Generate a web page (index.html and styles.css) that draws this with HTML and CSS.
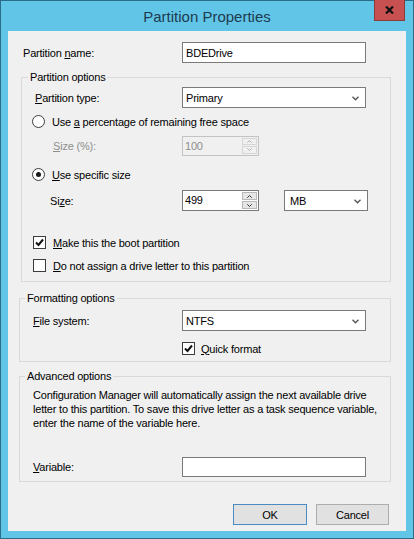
FILE: index.html
```html
<!DOCTYPE html>
<html lang="en">
<head>
    <meta charset="UTF-8">
    <title>Partition Properties</title>
    <link rel="stylesheet" href="styles.css">
</head>
<body>
<div class="window">
    <div class="titlebar">
        <span class="title">Partition Properties</span>
        <div class="close">
            <svg width="9" height="8" viewBox="0 0 9 8"><path d="M1 0.5 L8 7.5 M8 0.5 L1 7.5" stroke="#111" stroke-width="2.2" fill="none"/></svg>
        </div>
    </div>

    <div class="panel">
        <div class="row name-row">
            <span class="lbl">Partition <u>n</u>ame:</span>
            <div class="edit wide">BDEDrive</div>
        </div>

        <fieldset class="group g-part">
            <legend>Partition options</legend>
            <div class="row type-row">
                <span class="lbl"><u>P</u>artition type:</span>
                <div class="combo wide">
                    <span>Primary</span>
                    <svg width="7" height="5" viewBox="0 0 7 5"><polyline points="0.5,0.8 3.5,3.8 6.5,0.8" stroke="#555" stroke-width="1.4" fill="none"/></svg>
                </div>
            </div>
            <div class="row opt pct-opt">
                <span class="radio"></span>
                <span>Use <u>a</u> percentage of remaining free space</span>
            </div>
            <div class="row pct-row">
                <span class="lbl off"><u>S</u>ize (%):</span>
                <div class="spin off">
                    <span class="spin-text">100</span>
                    <span class="arrows">
                        <span class="arr"><svg width="5" height="3" viewBox="0 0 5 3"><polyline points="0.3,2.7 2.5,0.5 4.7,2.7" stroke="#b0b0b0" stroke-width="1" fill="none"/></svg></span>
                        <span class="arr"><svg width="5" height="3" viewBox="0 0 5 3"><polyline points="0.3,0.3 2.5,2.5 4.7,0.3" stroke="#b0b0b0" stroke-width="1" fill="none"/></svg></span>
                    </span>
                </div>
            </div>
            <div class="row opt size-opt">
                <span class="radio on"></span>
                <span><u>U</u>se specific size</span>
            </div>
            <div class="row size-row">
                <span class="lbl">Si<u>z</u>e:</span>
                <div class="spin">
                    <span class="spin-text">499</span>
                    <span class="arrows">
                        <span class="arr"><svg width="5" height="3" viewBox="0 0 5 3"><polyline points="0.3,2.7 2.5,0.5 4.7,2.7" stroke="#333" stroke-width="1" fill="none"/></svg></span>
                        <span class="arr"><svg width="5" height="3" viewBox="0 0 5 3"><polyline points="0.3,0.3 2.5,2.5 4.7,0.3" stroke="#333" stroke-width="1" fill="none"/></svg></span>
                    </span>
                </div>
                <div class="combo unit">
                    <span>MB</span>
                    <svg width="7" height="5" viewBox="0 0 7 5"><polyline points="0.5,0.8 3.5,3.8 6.5,0.8" stroke="#555" stroke-width="1.4" fill="none"/></svg>
                </div>
            </div>
            <div class="row opt boot-opt">
                <span class="check"><svg width="11" height="11" viewBox="0 0 11 11"><polyline points="2,5.5 4.5,8 9,2.5" stroke="#111" stroke-width="2" fill="none"/></svg></span>
                <span><u>M</u>ake this the boot partition</span>
            </div>
            <div class="row opt letter-opt">
                <span class="check"></span>
                <span><u>D</u>o not assign a drive letter to this partition</span>
            </div>
        </fieldset>

        <fieldset class="group g-format">
            <legend>Formatting options</legend>
            <div class="row fs-row">
                <span class="lbl"><u>F</u>ile system:</span>
                <div class="combo wide">
                    <span>NTFS</span>
                    <svg width="7" height="5" viewBox="0 0 7 5"><polyline points="0.5,0.8 3.5,3.8 6.5,0.8" stroke="#555" stroke-width="1.4" fill="none"/></svg>
                </div>
            </div>
            <div class="row opt quick-opt">
                <span class="check"><svg width="11" height="11" viewBox="0 0 11 11"><polyline points="2,5.5 4.5,8 9,2.5" stroke="#111" stroke-width="2" fill="none"/></svg></span>
                <span><u>Q</u>uick format</span>
            </div>
        </fieldset>

        <fieldset class="group g-adv">
            <legend>Advanced options</legend>
            <p class="note">Configuration Manager will automatically assign the next available drive<br>letter to this partition. To save this drive letter as a task sequence variable,<br>enter the name of the variable here.</p>
            <div class="row var-row">
                <span class="lbl"><u>V</u>ariable:</span>
                <div class="edit wide"></div>
            </div>
        </fieldset>

        <div class="buttons">
            <div class="btn default">OK</div>
            <div class="btn">Cancel</div>
        </div>
    </div>
</div>
</body>
</html>
```

FILE: styles.css
```css
* {
    box-sizing: border-box;
}

body {
    margin: 0;
    font-family: "Liberation Sans", Arial, sans-serif;
    font-size: 11px;
    letter-spacing: -0.2px;
    color: #000;
}

u {
    text-underline-offset: 1px;
}

.window {
    width: 414px;
    height: 539px;
    border: 1px solid #2b6d89;
    background: #61c5e7;
    padding: 0 7px 7px;
    display: flex;
    flex-direction: column;
}

.titlebar {
    height: 30px;
    display: grid;
    grid-template-columns: 1fr auto 1fr;
    align-items: center;
}

.title {
    grid-column: 2;
    font-size: 15px;
    letter-spacing: 0;
    color: #1d3b4f;
}

.close {
    grid-column: 3;
    justify-self: end;
    align-self: start;
    width: 31px;
    height: 21px;
    margin-top: -1px;
    margin-right: 1px;
    background: #c75050;
    border: 1px solid #8d3a3a;
    border-top: none;
    display: flex;
    align-items: center;
    justify-content: center;
}

.panel {
    height: 500px;
    background: #f0f0f0;
    padding-top: 11px;
}

.row {
    display: flex;
    align-items: center;
    height: 21px;
}

.lbl {
    flex: none;
}

.off {
    color: #8e8e8e;
}

/* text boxes and combos */
.edit, .combo {
    height: 21px;
    border: 1px solid #7a7a7a;
    background: #fff;
    display: flex;
    align-items: center;
    padding-left: 3px;
}

.wide {
    width: 184px;
}

.combo {
    justify-content: space-between;
    padding-right: 6px;
}

.combo svg {
    margin-top: 1px;
}

.unit {
    width: 84px;
    margin-left: 25px;
    padding-left: 5px;
}

.spin {
    width: 77px;
    height: 21px;
    display: flex;
    border: 1px solid #7a7a7a;
    background: #fff;
}

.spin-text {
    flex: 1;
    padding-left: 2px;
    line-height: 19px;
}

.arrows {
    width: 17px;
    display: flex;
    flex-direction: column;
    padding: 1px;
    gap: 1px;
}

.arr {
    flex: 1;
    background: #e6e6e6;
    border: 1px solid #b9b9b9;
    display: flex;
    align-items: center;
    justify-content: center;
}

.spin.off {
    border-color: #c3c3c3;
    background: #f0f0f0;
    color: #8e8e8e;
    height: 20px;
}

.spin.off .arr {
    background: #f0f0f0;
    border-color: #d6d6d6;
}

/* radios and checks */
.opt {
    height: 15px;
    gap: 7px;
}

.radio {
    width: 13px;
    height: 13px;
    border: 1px solid #3c3c3c;
    border-radius: 50%;
    background: #fff;
    display: flex;
    align-items: center;
    justify-content: center;
}

.radio.on::after {
    content: "";
    width: 5px;
    height: 5px;
    border-radius: 50%;
    background: #1a1a1a;
}

.check {
    width: 13px;
    height: 13px;
    border: 1px solid #3c3c3c;
    background: #fff;
    display: flex;
    align-items: center;
    justify-content: center;
}

/* group boxes */
.group {
    margin: 0 15px 0 11px;
    padding: 0;
    border: 1px solid #d9d9d9;
    min-width: 0;
}

.group legend {
    padding: 0 2px;
    margin-left: 5px;
    line-height: 15px;
}

.name-row {
    padding-left: 15px;
}

.name-row .lbl {
    width: 159px;
}

.g-part {
    margin-top: 7px;
    margin-left: 13px;
    padding: 2px 0 8px;
}

.g-part legend {
    margin-left: 6px;
}

.type-row {
    padding-left: 13px;
}

.type-row .lbl {
    width: 147px;
}

.pct-opt {
    margin-top: 6px;
    padding-left: 10px;
}

.pct-row {
    margin-top: 6px;
    padding-left: 31px;
}

.pct-row .lbl {
    width: 129px;
}

.size-opt {
    margin-top: 11px;
    padding-left: 10px;
}

.size-row {
    margin-top: 8px;
    padding-left: 28px;
}

.size-row .lbl {
    width: 132px;
}

.boot-opt {
    margin-top: 24px;
    padding-left: 11px;
}

.letter-opt {
    margin-top: 8px;
    padding-left: 11px;
}

.g-format {
    margin-top: 9px;
    padding: 4px 0 5px;
}

.fs-row {
    padding-left: 13px;
}

.fs-row .lbl {
    width: 149px;
}

.quick-opt {
    margin-top: 10px;
    padding-left: 162px;
    gap: 6px;
}

.g-adv {
    margin-top: 7px;
    padding: 4px 0 4px;
}

.note {
    margin: 0;
    padding-left: 13px;
    line-height: 14px;
    white-space: nowrap;
}

.var-row {
    margin-top: 27px;
    height: 20px;
    padding-left: 13px;
}

.var-row .lbl {
    width: 149px;
}

.var-row .edit {
    height: 20px;
}

.buttons {
    display: flex;
    justify-content: flex-end;
    gap: 9px;
    margin-top: 22px;
    padding-right: 17px;
}

.btn {
    width: 73px;
    height: 21px;
    border: 1px solid #adadad;
    background: #e1e1e1;
    display: flex;
    align-items: center;
    justify-content: center;
}

.btn.default {
    width: 74px;
    border-color: #4a8bc2;
}
```
